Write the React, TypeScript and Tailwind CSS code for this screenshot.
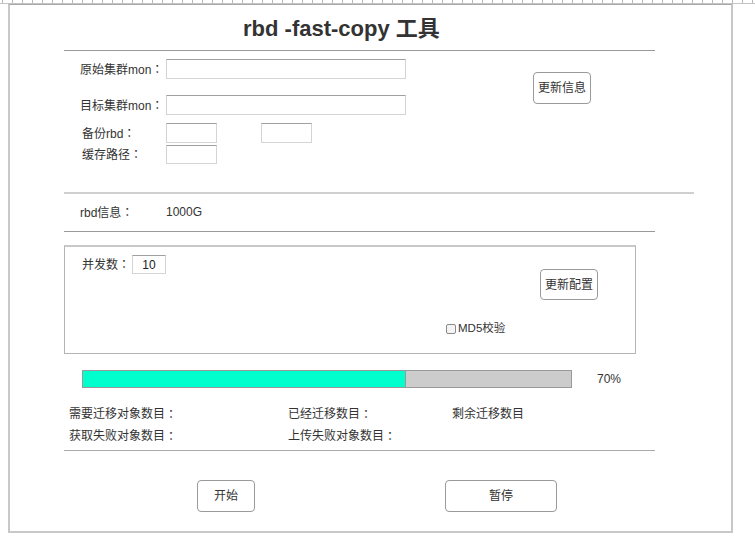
import React from "react";

const ticks = Array.from({ length: 76 });

function T({ s }: { s: string }) {
  const parts = s.split("：");
  return (
    <>
      {parts.map((p, i) => (
        <React.Fragment key={i}>
          {p}
          {i < parts.length - 1 && <span className="font-['Noto_Sans_CJK_JP',sans-serif]">：</span>}
        </React.Fragment>
      ))}
    </>
  );
}

function Input({ w, h = "h-[20px]", children }: { w: string; h?: string; children?: React.ReactNode }) {
  return (
    <div className={`${w} ${h} border border-[#d4d4d4] border-t-[#a0a0a0] bg-white flex items-center justify-center text-[12px] text-[#222]`}>
      {children}
    </div>
  );
}

function Btn({ w, h = "h-[32px]", children }: { w: string; h?: string; children: React.ReactNode }) {
  return (
    <div className={`${w} ${h} border border-[#9a9a9a] rounded-[4px] bg-white flex items-center justify-center text-[12px] text-[#333]`}>
      {children}
    </div>
  );
}

export default function App() {
  return (
    <div className="w-[755px] h-[554px] bg-white font-['Liberation_Sans','Noto_Sans_CJK_SC',sans-serif] text-[#333] overflow-hidden">
      {/* ruler */}
      <div className="flex h-[3px] pl-[2px]">
        {ticks.map((_, i) => (
          <div key={i} className="w-[10px] h-[3px] shrink-0 border-l border-[#b8b8b8]" />
        ))}
      </div>
      <div className="border-t border-[#c4c4c4]">
        <div className="ml-[8px] w-[725px] h-[529px] border-x-2 border-b-2 border-t border-[#c8c8c8] border-t-[#a8a8a8] flex flex-col pl-[54px]">
          {/* title */}
          <div className="h-[45px] flex items-center pl-[179px] pt-[2px]">
            <span className="text-[22px] font-bold text-[#333] leading-none">rbd -fast-copy 工具</span>
          </div>
          <div className="w-[591px] h-px bg-[#999]" />

          {/* form */}
          <div className="flex">
            <div className="flex flex-col text-[12px]">
              <div className="flex items-center mt-[8px]">
                <span className="w-[102px] pl-[16px]"><T s="原始集群mon：" /></span>
                <Input w="w-[240px]" />
              </div>
              <div className="flex items-center mt-[16px]">
                <span className="w-[102px] pl-[16px]"><T s="目标集群mon：" /></span>
                <Input w="w-[240px]" />
              </div>
              <div className="flex items-center mt-[8px]">
                <span className="w-[102px] pl-[18px]"><T s="备份rbd：" /></span>
                <Input w="w-[51px]" />
                <div className="w-[44px]" />
                <Input w="w-[51px]" />
              </div>
              <div className="flex items-center mt-[2px]">
                <span className="w-[102px] pl-[18px]"><T s="缓存路径：" /></span>
                <Input w="w-[51px]" h="h-[19px]" />
              </div>
            </div>
            <div className="ml-[127px] mt-[21px]">
              <Btn w="w-[58px]">更新信息</Btn>
            </div>
          </div>

          <div className="mt-[28px] w-[630px] h-[2px] bg-[#d0d0d0]" />
          <div className="h-[36px] flex items-center text-[12px]">
            <span className="w-[102px] pl-[16px]"><T s="rbd信息：" /></span>
            <span>1000G</span>
          </div>
          <div className="mt-[1px] w-[591px] h-px bg-[#999]" />

          {/* config box */}
          <div className="mt-[13px] w-[572px] h-[109px] border border-[#b4b4b4] border-t-[#c8c8c8] border-t-2 flex flex-col text-[12px]">
            <div className="flex justify-between items-start">
              <div className="flex items-center mt-[8px] pl-[17px]">
                <span className="w-[50px]"><T s="并发数：" /></span>
                <Input w="w-[34px]" h="h-[19px]">10</Input>
              </div>
              <div className="mt-[22px] mr-[37px]">
                <Btn w="w-[58px]" h="h-[31px]">更新配置</Btn>
              </div>
            </div>
            <div className="mt-[22px] pl-[381px] flex items-center h-[14px]">
              <div className="w-[10px] h-[10px] border border-[#8a8a8a] rounded-[2px] bg-[#f4f4f4] mr-[2px]" />
              <span className="text-[11.5px]">MD5校验</span>
            </div>
          </div>

          {/* progress */}
          <div className="mt-[16px] flex items-center">
            <div className="ml-[18px] w-[490px] h-[18px] border border-[#999] bg-[#cccccc] flex">
              <div className="w-[323px] h-full bg-[#00ffcc] border-r border-[#999]" />
            </div>
            <span className="ml-[25px] text-[12px]">70%</span>
          </div>

          {/* stats */}
          <div className="mt-[15px] grid grid-cols-[224px_164px_200px] text-[12px] pl-[5px]">
            <div className="h-[22px] flex items-center"><T s="需要迁移对象数目：" /></div>
            <div className="h-[22px] flex items-center -ml-[5px]"><T s="已经迁移数目：" /></div>
            <div className="h-[22px] flex items-center -ml-[5px]">剩余迁移数目</div>
            <div className="h-[22px] flex items-center"><T s="获取失败对象数目：" /></div>
            <div className="h-[22px] flex items-center -ml-[5px]"><T s="上传失败对象数目：" /></div>
            <div className="h-[22px]" />
          </div>
          <div className="mt-[3px] w-[591px] h-px bg-[#aaa]" />

          {/* buttons */}
          <div className="mt-[29px] flex">
            <div className="ml-[133px]">
              <Btn w="w-[58px]">开始</Btn>
            </div>
            <div className="ml-[190px]">
              <Btn w="w-[112px]">暂停</Btn>
            </div>
          </div>
        </div>
      </div>
    </div>
  );
}
